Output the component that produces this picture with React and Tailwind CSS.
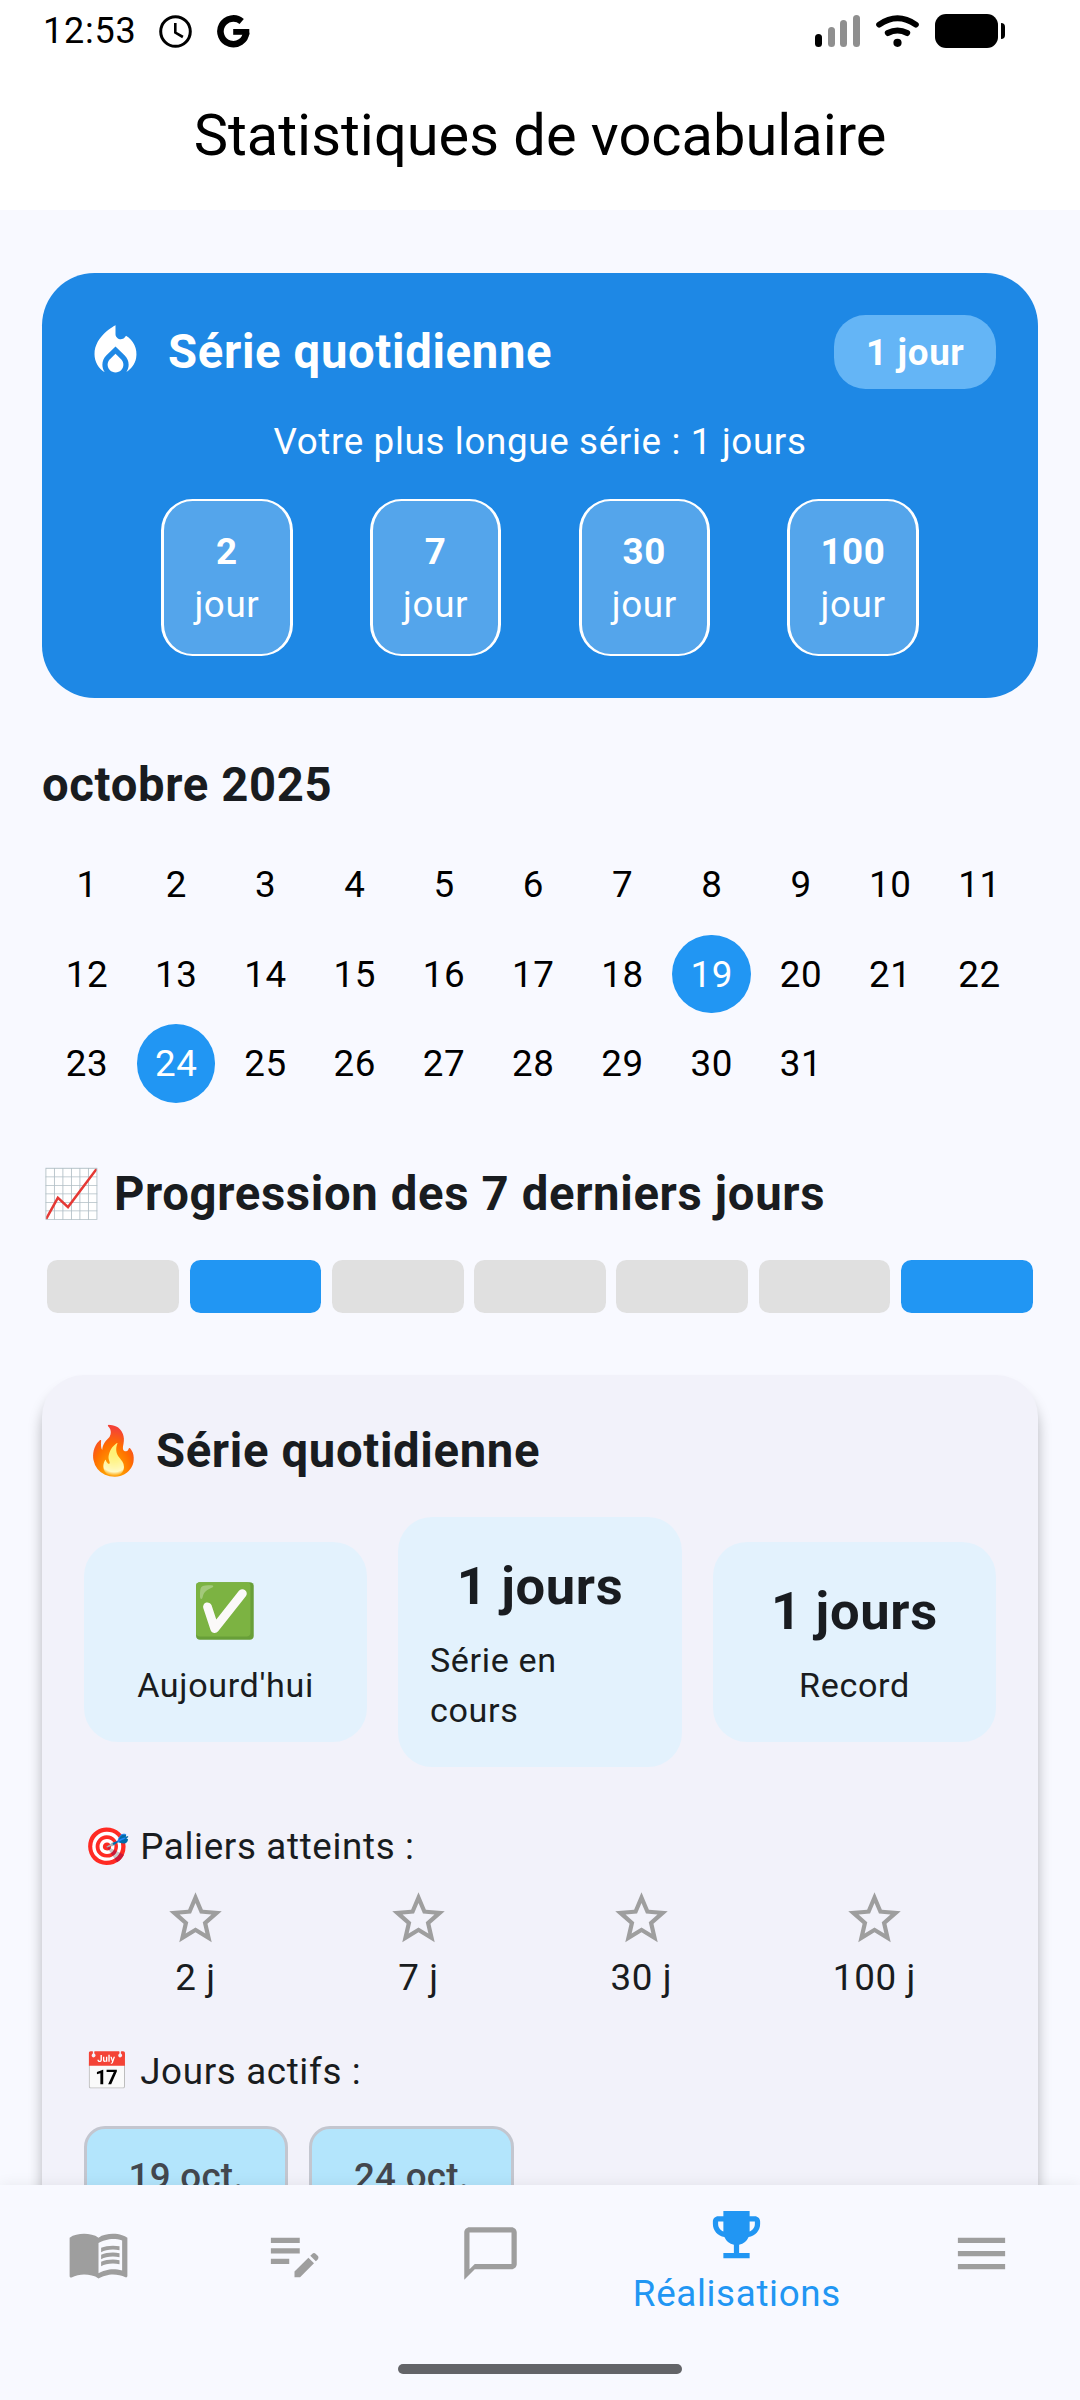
import React from "react";
import {
  MdChatBubbleOutline,
  MdEditNote,
  MdEmojiEvents,
  MdLocalFireDepartment,
  MdMenu,
  MdMenuBook,
  MdStarBorder,
} from "react-icons/md";

const MILESTONES = [2, 7, 30, 100];
const DAYS = Array.from({ length: 31 }, (_, i) => i + 1);
const ACTIVE_DAYS = [19, 24];
const LAST_WEEK = [false, true, false, false, false, false, true];

function StatusBar() {
  return (
    <div className="flex h-[61px] shrink-0 items-start pl-[43px] pr-[75px]">
      <span className="w-[116px] text-[36px] leading-[63px] tracking-[0.8px]">12:53</span>
      <svg className="mt-[15px] h-[33px] w-[33px]" viewBox="0 0 33 33" fill="none" stroke="#000">
        <circle cx="16.5" cy="16.5" r="14.8" strokeWidth="3" />
        <path d="M16.3 8v9.6l7.6 4.4" strokeWidth="2.6" />
      </svg>
      <svg className="ml-[25px] mt-[15px] h-[33px] w-[33px]" viewBox="0 0 33 33" fill="none" stroke="#000">
        <path d="M24.7 6.5A12.9 12.9 0 1 0 29.2 17.5" strokeWidth="6.6" />
        <path d="M16.2 16.9H32.3" strokeWidth="5.8" />
      </svg>
      <div className="ml-auto mt-[15px] flex h-[32px] items-end gap-[5.6px]">
        <i className="h-[13.5px] w-[7px] rounded-full bg-black" />
        <i className="h-[20px] w-[7px] rounded-full bg-[#8f8f8f]" />
        <i className="h-[27px] w-[7px] rounded-full bg-[#8f8f8f]" />
        <i className="h-[32px] w-[7px] rounded-full bg-[#8f8f8f]" />
      </div>
      <svg className="ml-[16px] mt-[15px] h-[32px] w-[43px]" viewBox="0 0 43 32" fill="none" stroke="#000" strokeLinecap="round">
        <path d="M3.2 9.6Q21.5 -3 39.8 9.6" strokeWidth="6" />
        <path d="M11.8 18Q21.5 13 31.2 18" strokeWidth="6" />
        <circle cx="21.5" cy="27.8" r="4.1" fill="#000" stroke="none" />
      </svg>
      <i className="ml-[16px] mt-[14px] h-[34px] w-[63px] rounded-[11px] bg-black" />
      <i className="ml-[3px] mt-[23px] h-[16px] w-[4px] rounded-r-[4px] bg-black" />
    </div>
  );
}

function StreakBanner() {
  return (
    <section className="h-[425.25px] rounded-[52.5px] bg-[#1E88E5] p-[42px] text-white">
      <div className="flex h-[73.5px] items-center">
        <MdLocalFireDepartment size={63} />
        <h2 className="ml-[21px] pt-[2px] text-[47.25px] font-bold leading-[67.5px]">Série quotidienne</h2>
        <span className="ml-auto rounded-[31.5px] bg-[#64B5F6] px-[31.5px] pb-[9.5px] pt-[11.5px] font-bold">1 jour</span>
      </div>
      <p className="mt-[27.25px] text-center">Votre plus longue série : 1 jours</p>
      <div className="mt-[30.5px] flex justify-evenly">
        {MILESTONES.map((n) => (
          <div
            key={n}
            className="flex h-[157.5px] w-[131.5px] flex-col items-center justify-center rounded-[31.5px] border-x-[3px] border-y-2 border-white bg-[#54A5EB] pt-[2px]"
          >
            <b className="font-bold">{n}</b>
            <span>jour</span>
          </div>
        ))}
      </div>
    </section>
  );
}

function Calendar() {
  return (
    <section className="mt-[52.5px]">
      <h2 className="h-[68.25px] text-[47.25px] font-bold leading-[68.25px]">octobre 2025</h2>
      <div className="mt-[21px] flex flex-wrap text-black">
        {DAYS.map((d) => (
          <span
            key={d}
            className={
              ACTIVE_DAYS.includes(d)
                ? "m-[5.25px] h-[78.75px] w-[78.75px] rounded-full bg-[#2196F3] pl-px text-center leading-[80px] text-white"
                : "m-[5.25px] h-[78.75px] w-[78.75px] pl-px text-center leading-[80px]"
            }
          >
            {d}
          </span>
        ))}
      </div>
    </section>
  );
}

function Progress() {
  return (
    <section className="mt-[52.5px]">
      <h2 className="h-[68.25px] whitespace-nowrap text-[47.25px] font-bold leading-[68.25px]">
        📈 Progression des 7 derniers jours
      </h2>
      <div className="mt-[26.25px] flex">
        {LAST_WEEK.map((on, i) => (
          <i
            key={i}
            className={
              on
                ? "m-[5.25px] h-[52.5px] flex-1 rounded-[10.5px] bg-[#2196F3]"
                : "m-[5.25px] h-[52.5px] flex-1 rounded-[10.5px] bg-[#E0E0E0]"
            }
          />
        ))}
      </div>
    </section>
  );
}

function Tile({ value, label }) {
  return (
    <div className="flex flex-1 flex-col items-center gap-[12px] rounded-[34px] bg-[#E3F2FD] px-[31.5px] pb-[30.8px] pt-[32.5px]">
      <b className="h-[75px] text-[52.5px] font-bold leading-[75px]">{value}</b>
      <span className="text-[34.125px] leading-[49.75px]">{label}</span>
    </div>
  );
}

function Details() {
  return (
    <section className="mt-[57.25px] h-[1000px] rounded-[42px] bg-[#F2F2FA] p-[42px] shadow-[0_13px_14px_rgba(0,0,0,0.27)]">
      <h2 className="h-[68.25px] text-[47.25px] font-bold leading-[68.25px]">🔥 Série quotidienne</h2>
      <div className="mt-[31.5px] flex items-center gap-[31.3px]">
        <Tile value="✅" label="Aujourd'hui" />
        <Tile value="1 jours" label="Série en cours" />
        <Tile value="1 jours" label="Record" />
      </div>
      <p className="mt-[54.2px] h-[52.5px]">🎯 Paliers atteints :</p>
      <div className="mt-[13.5px] flex justify-around">
        {MILESTONES.map((n) => (
          <div key={n} className="flex flex-col items-center">
            <MdStarBorder size={63} color="#9E9E9E" />
            <span className="mt-[2px]">{n} j</span>
          </div>
        ))}
      </div>
      <p className="mt-[41.5px] h-[52.5px]">📅 Jours actifs :</p>
      <div className="mt-[27.5px] flex gap-[21px]">
        {ACTIVE_DAYS.map((d) => (
          <span
            key={d}
            className="h-[102px] w-[204.4px] rounded-[21px] border-[3px] border-[#C3C6CF] bg-[#B3E5FC] text-center font-medium leading-[96px] tracking-[0.2625px] text-[#43474E]"
          >
            {d} oct.
          </span>
        ))}
      </div>
    </section>
  );
}

function BottomNav() {
  return (
    <nav className="z-10 flex h-[215px] shrink-0 flex-col items-center bg-[#F8F9FF] text-[#9E9E9E] shadow-[0_0_14px_rgba(0,0,0,0.07)]">
      <div className="flex h-[179px] w-full items-start">
        <div className="flex flex-[2] justify-center pt-[37px]"><MdMenuBook size={63} /></div>
        <div className="flex flex-[2] justify-center pt-[37px]"><MdEditNote size={63} /></div>
        <div className="flex flex-[2] justify-center pt-[37px]"><MdChatBubbleOutline size={63} /></div>
        <div className="flex flex-[3] flex-col items-center pt-[18px] text-[#2196F3]">
          <MdEmojiEvents size={63} />
          <span className="mt-[2px] pl-px">Réalisations</span>
        </div>
        <div className="flex flex-[2] justify-center pt-[37px]"><MdMenu size={63} /></div>
      </div>
      <i className="h-[10px] w-[284px] rounded-full bg-[#636468]" />
    </nav>
  );
}

export default function App() {
  return (
    <div className="flex h-[2400px] w-[1080px] flex-col overflow-hidden bg-[#F8F9FF] font-['Roboto','Noto_Color_Emoji',sans-serif] text-[36.75px] leading-[52.5px] tracking-[0.656px] text-[#191C20]">
      <header className="h-[210px] shrink-0 bg-white text-black">
        <StatusBar />
        <h1 className="text-center text-[57.75px] leading-[149px] tracking-normal">Statistiques de vocabulaire</h1>
      </header>
      <main className="h-[1975px] shrink-0 overflow-hidden px-[42px] pt-[63px]">
        <StreakBanner />
        <Calendar />
        <Progress />
        <Details />
      </main>
      <BottomNav />
    </div>
  );
}
